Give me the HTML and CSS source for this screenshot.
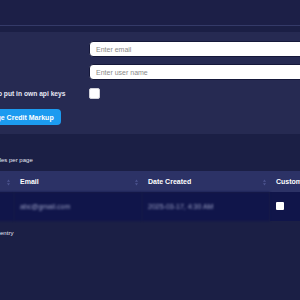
FILE: index.html
```html
<!DOCTYPE html>
<html lang="en">
<head>
  <meta charset="UTF-8">
  <title>Users</title>
  <link rel="stylesheet" href="styles.css">
</head>
<body>

  <div class="topbar"></div>

  <div class="panel">
    <div class="form-grid">
      <label class="field-label">Email</label>
      <input type="text" class="field-input" placeholder="Enter email">

      <label class="field-label">User Name</label>
      <input type="text" class="field-input" placeholder="Enter user name">

      <label class="field-label">Allow user to put in own api keys</label>
      <div class="check-cell"><input type="checkbox" class="check"></div>
    </div>
    <button class="btn-primary">Change Credit Markup</button>
  </div>

  <div class="per-page">Show 10 profiles per page</div>

  <table class="users-table">
    <thead>
      <tr>
        <th><span>User Name</span><svg class="sort" viewBox="0 0 4 8"><path d="M2 0L4 3H0z M2 8L0 5h4z"/></svg></th>
        <th><span>Email</span><svg class="sort" viewBox="0 0 4 8"><path d="M2 0L4 3H0z M2 8L0 5h4z"/></svg></th>
        <th><span>Date Created</span><svg class="sort" viewBox="0 0 4 8"><path d="M2 0L4 3H0z M2 8L0 5h4z"/></svg></th>
        <th><span>Customer Keys</span></th>
      </tr>
    </thead>
    <tbody>
      <tr>
        <td class="muted">abc</td>
        <td class="muted">abc@gmail.com</td>
        <td class="muted">2025-03-17, 4:30 AM</td>
        <td><input type="checkbox" class="check check-sm"></td>
      </tr>
    </tbody>
  </table>

  <div class="table-info">Showing 1 to 1 of 1 entry</div>

</body>
</html>
```

FILE: styles.css
```css
* {
  box-sizing: border-box;
}

body {
  margin: 0;
  background: #1b1f45;
  color: #e6e8f4;
  font-family: 'Liberation Sans', Arial, sans-serif;
  overflow: hidden;
}

.topbar {
  height: 26px;
  background: #1c1f47;
  border-bottom: 1px solid #343a68;
}

.panel {
  margin-top: 6px;
  background: #262a52;
  padding: 9px 0 9px;
}

.form-grid {
  display: grid;
  grid-template-columns: 129px 1fr;
  row-gap: 7px;
  align-items: center;
  margin-left: -40px;
}

.field-label {
  font-size: 6.7px;
  font-weight: bold;
  color: #e6e8f4;
}

.field-input {
  height: 16px;
  border: 1px solid #15183a;
  border-radius: 4px;
  background: #fff;
  padding: 0 6px;
  font-family: inherit;
  font-size: 7px;
  width: 260px;
}

.field-input::placeholder {
  color: #8a8a8a;
}

.check-cell {
  height: 13px;
  display: flex;
  align-items: center;
}

.check {
  appearance: none;
  width: 11px;
  height: 11px;
  margin: 0;
  background: #fff;
  border: 1px solid #d0d0d8;
  border-radius: 2px;
}

.check-sm {
  width: 8px;
  height: 8px;
  border-radius: 1px;
  border: none;
}

.btn-primary {
  margin: 9px 0 0 -28px;
  height: 16px;
  padding: 0 7px;
  background: #1c9bf0;
  color: #fff;
  border: none;
  border-radius: 4px;
  font-family: inherit;
  font-size: 7px;
  font-weight: bold;
}

.per-page {
  margin: 22px 0 0 -37px;
  font-size: 6px;
  line-height: 8px;
  color: #e6e8f4;
}

.users-table {
  margin: 7px 0 0 -114px;
  border-collapse: collapse;
  table-layout: fixed;
  width: 512px;
}

.users-table th,
.users-table td {
  width: 128px;
  padding: 0 6px;
  text-align: left;
  font-size: 7px;
}

.users-table th {
  height: 21px;
  background: #2c3266;
  color: #fff;
  font-weight: bold;
}

.users-table th span {
  display: inline-block;
}

.users-table th .sort {
  float: right;
  width: 3px;
  height: 7px;
  margin: 1px -2px 0 0;
  fill: #4d5590;
}

.users-table td {
  height: 29px;
  background: #10154a;
}

.users-table td.muted {
  color: #9aa0c4;
  filter: blur(1px);
}

.table-info {
  margin: 8px 0 0 -53px;
  font-size: 6px;
  line-height: 8px;
  color: #e6e8f4;
}
```
